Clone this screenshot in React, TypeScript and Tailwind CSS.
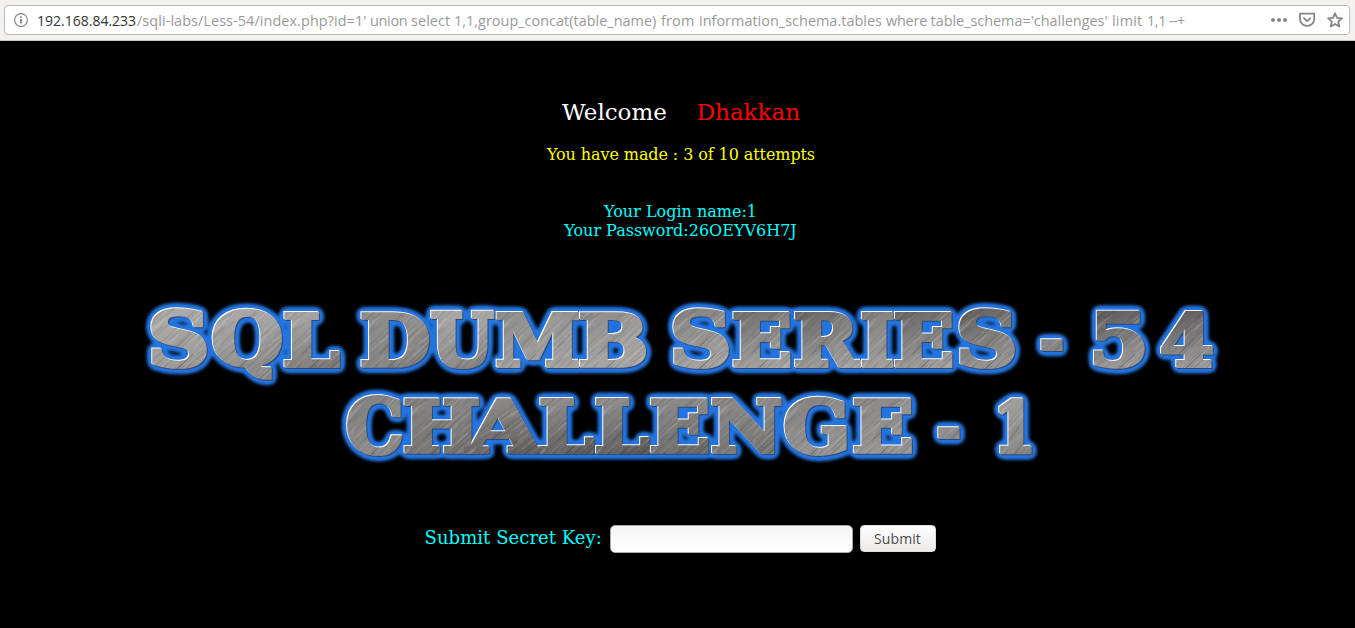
import React from "react";

type Glyph = { ch: string; x: [number, number]; y: [number, number]; tone: [string, string] };

const g = (ch: string, x0: number, x1: number, y0: number, y1: number, top: string, bottom: string): Glyph => ({
  ch,
  x: [x0, x1],
  y: [y0, y1],
  tone: [top, bottom],
});

const T1 = 311;
const B1 = 367.5;
const T2 = 398.5;
const B2 = 454;

// Letters of one inner list touch and share a single outline.
const runs: Glyph[][] = [
  [g("S", 150, 206.5, 309, 369, "#adabaa", "#979594")],
  [g("Q", 211.5, 281, 309, 380, "#aba9a8", "#8b8988")],
  [g("L", 283, 339.5, T1, B1, "#a8a6a5", "#757372")],
  [g("D", 360, 428.5, T1, B1, "#8f8d8c", "#858382")],
  [g("U", 430, 494, T1, 368.5, "#aba9a8", "#838180")],
  [g("M", 495.5, 578, T1, B1, "#918f8e", "#a6a4a3")],
  [g("B", 578.5, 645, T1, B1, "#918f8e", "#b1afae")],
  [g("S", 672, 728.5, 309.5, 369, "#8a8887", "#adabaa")],
  [g("E", 732, 790, T1, B1, "#767473", "#b1afae")],
  [g("R", 793.5, 860, T1, B1, "#6e6c6b", "#abaaa9")],
  [g("I", 860.5, 893, T1, B1, "#858382", "#abaaa9")],
  [g("E", 893.5, 952, T1, B1, "#6e6c6b", "#abaaa9")],
  [g("S", 958, 1014.5, 309.5, 369, "#6b6968", "#a3a1a0")],
  [g("-", 1040, 1062, 340, 352, "#8d8b8a", "#858382")],
  [g("5", 1093, 1144.5, T1, 369, "#626060", "#afadac")],
  [g("4", 1160, 1212, T1, B1, "#626060", "#abaaa9")],
  [g("C", 346, 401.5, 395.5, 455.5, "#848281", "#918f8e")],
  [
    g("H", 403, 478, T2, B2, "#858382", "#757372"),
    g("A", 463, 544, T2, B2, "#8d8b8a", "#5c5a59"),
    g("L", 539, 594, T2, B2, "#8f8d8c", "#565453"),
  ],
  [g("L", 594.5, 649, T2, B2, "#8f8d8c", "#545251")],
  [g("E", 649.5, 708, T2, B2, "#8d8b8a", "#676564")],
  [g("N", 711, 781, T2, B2, "#8b8988", "#757372")],
  [g("G", 783.5, 846, 396.5, 455.5, "#868483", "#9b9998")],
  [g("E", 852.5, 911.5, T2, B2, "#8d8b8a", "#9b9998")],
  [g("-", 937, 959, 427.5, 439.5, "#979594", "#858382")],
  [g("1", 998, 1031, T2, B2, "#a19f9e", "#858382")],
];

const FONT = '"DejaVu Serif", serif';
const WEIGHT = 4;

const measure = document.createElement("canvas").getContext("2d")!;
measure.font = `bold 100px ${FONT}`;

function transformOf({ ch, x, y }: Glyph) {
  const m = measure.measureText(ch);
  const sx = (x[1] - x[0] - WEIGHT) / (m.actualBoundingBoxRight + m.actualBoundingBoxLeft);
  const sy = (y[1] - y[0] - WEIGHT) / (m.actualBoundingBoxAscent + m.actualBoundingBoxDescent);
  const tx = x[0] + WEIGHT / 2 + m.actualBoundingBoxLeft * sx;
  const ty = y[0] + WEIGHT / 2 + m.actualBoundingBoxAscent * sy;
  return `translate(${tx} ${ty}) scale(${sx} ${sy})`;
}

// Uneven diagonal scratches of the brushed metal.
function scratches(dark: boolean) {
  let seed = dark ? 7 : 31;
  const rnd = () => (seed = (seed * 16807) % 2147483647) / 2147483647;
  let d = "";
  for (let i = 0; i < 150; i++) {
    const x = rnd() * 230 - 90;
    const y = rnd() * 150 - 100;
    const l = 12 + rnd() * 32;
    d += `M${x.toFixed(1)} ${y.toFixed(1)}l${l.toFixed(1)} ${(-l * 1.05).toFixed(1)}`;
  }
  return d;
}

const lightLines = scratches(false);
const darkLines = scratches(true);

function Banner() {
  const area = { filterUnits: "userSpaceOnUse", x: 130, y: 285, width: 1104, height: 200, colorInterpolationFilters: "sRGB" } as const;
  return (
    <svg className="block" width="1084" height="180" viewBox="140 295 1084 180">
      <defs>
        {runs.flatMap((run, r) =>
          run.map((l, i) => (
            <React.Fragment key={`${r}-${i}`}>
              <linearGradient id={`tone-${r}-${i}`} x1="0.4" y1="0.2" x2="0.6" y2="0.8">
                <stop offset="0" stopColor={l.tone[0]} />
                <stop offset="1" stopColor={l.tone[1]} />
              </linearGradient>
              <pattern id={`metal-${r}-${i}`} patternUnits="userSpaceOnUse" x="-10" y="-110" width="150" height="150" viewBox="-10 -110 150 150">
                <rect x="-10" y="-110" width="150" height="150" fill={`url(#tone-${r}-${i})`} />
                <path d={lightLines} stroke="#fff" strokeOpacity=".22" strokeWidth="1" />
                <path d={darkLines} stroke="#000" strokeOpacity=".16" strokeWidth="1" />
              </pattern>
            </React.Fragment>
          )),
        )}
        <filter id="bevel" {...area}>
          <feFlood floodColor="#fff" result="white" />
          <feOffset in="SourceAlpha" dx="-1" dy="-1" result="nw" />
          <feComposite in="white" in2="nw" operator="in" result="light" />
          <feFlood floodColor="#2b4a74" result="navy" />
          <feOffset in="SourceAlpha" dx="0.7" dy="0.7" result="se" />
          <feComposite in="navy" in2="se" operator="in" result="shade" />
          <feMerge>
            <feMergeNode in="shade" />
            <feMergeNode in="light" />
            <feMergeNode in="SourceGraphic" />
          </feMerge>
        </filter>
        <filter id="glow" {...area}>
          <feGaussianBlur in="SourceAlpha" stdDeviation="3.1" />
          <feComponentTransfer result="spread">
            <feFuncA type="linear" slope="7" intercept="-0.12" />
          </feComponentTransfer>
          <feFlood floodColor="#2374e0" />
          <feComposite in2="spread" operator="in" />
          <feGaussianBlur stdDeviation="1.3" result="halo" />
          <feMerge>
            <feMergeNode in="halo" />
            <feMergeNode in="SourceGraphic" />
          </feMerge>
        </filter>
      </defs>
      <g filter="url(#glow)" fontFamily={FONT} fontWeight="bold" fontSize="100" strokeWidth={WEIGHT}>
        {runs.map((run, r) => (
          <g key={r} filter="url(#bevel)">
            {run.map((l, i) => (
              <text
                key={i}
                transform={transformOf(l)}
                fill={`url(#metal-${r}-${i})`}
                stroke={`url(#metal-${r}-${i})`}
                strokeMiterlimit="2"
                vectorEffect="non-scaling-stroke"
              >
                {l.ch}
              </text>
            ))}
          </g>
        ))}
      </g>
    </svg>
  );
}

const words: [string, string][] = [
  ["/sqli-labs/Less-54/index.php?id=1'", "w-[233px] tracking-[0.09px]"],
  ["union", "w-[41px] tracking-[-0.3px]"],
  ["select", "w-[43px] tracking-[0.1px]"],
  ["1,1,group_concat(table_name)", "w-[207px] tracking-[0.04px]"],
  ["from", "w-[38px] tracking-[0.2px]"],
  ["information_schema.tables", "w-[187px] tracking-[0.04px]"],
  ["where", "w-[44.5px] tracking-[-0.2px]"],
  ["table_schema='challenges'", "w-[181.5px]"],
  ["limit", "w-[35px] tracking-[0.2px]"],
  ["1,1", "w-[22px] tracking-[-0.4px]"],
  ["--+", "w-[20px] tracking-[-0.6px]"],
];

export default function App() {
  return (
    <div className="flex h-[628px] w-[1355px] flex-col overflow-hidden bg-black font-['DejaVu_Serif',serif]">
      <header className="h-[41px] shrink-0 border-b border-[#c9c5c1] bg-[#f2f1f0] pt-[5px] pl-1">
        <div className="flex h-[30px] w-[1346px] items-center rounded-[4px] border border-[#bdb9b5] bg-white pl-[9px] font-['Open_Sans',sans-serif] text-[14.4px] text-[#999]">
          <svg width="14" height="14" viewBox="0 0 14 14" fill="none" stroke="#808080" className="mr-[9px]">
            <circle cx="7" cy="7" r="6.4" strokeWidth="1.1" />
            <path d="M7 6V10.5M7 3.2V4.8" strokeWidth="1.8" />
          </svg>
          <span className="w-[100px] whitespace-nowrap text-[14px] text-[#333]">192.168.84.233</span>
          {words.map(([t, w], i) => (
            <span key={i} className={`${w} shrink-0 pt-px whitespace-nowrap`}>
              {t}
            </span>
          ))}
          <div className="ml-auto flex items-center gap-[11px] pr-[6px]">
            <svg width="18" height="16" viewBox="0 0 18 16" fill="#858585">
              <circle cx="3" cy="8" r="2" />
              <circle cx="9" cy="8" r="2" />
              <circle cx="15" cy="8" r="2" />
            </svg>
            <svg width="17" height="16" viewBox="0 0 17 16" fill="none" stroke="#858585" strokeWidth="1.8" strokeLinecap="round" strokeLinejoin="round">
              <path d="M1 1.700H15.200V7.200A7.100 6.700 0 0 1 1 7.200ZM5 6.300L8.100 9.200L11.200 6.300" />
            </svg>
            <svg width="16" height="16" viewBox="0 0 16 16" fill="none" stroke="#858585" strokeWidth="1.8" strokeLinejoin="round">
              <path d="M8 1.300L10 5.800L14.900 6.300L11.200 9.600L12.300 14.500L8 12L3.700 14.500L4.800 9.600L1.100 6.300L6 5.800Z" />
            </svg>
          </div>
        </div>
      </header>
      <main className="flex flex-col items-center">
        <h1 className="mt-[57px] ml-[7px] flex h-7 w-[238px] items-center justify-between text-[23px] whitespace-nowrap">
          <span className="text-white">Welcome</span>
          <span className="text-[#f00]">Dhakkan</span>
        </h1>
        <p className="mt-[19px] ml-[7px] text-base leading-[19px] tracking-[-0.09px] text-[#ff0]">You have made : 3 of 10 attempts</p>
        <div className="mt-[38px] ml-1.5 text-center text-base leading-[19px] text-[#0ff]">
          <p>Your Login name:1</p>
          <p>Your Password:26OEYV6H7J</p>
        </div>
        <div className="mt-[55px] ml-[10px]">
          <Banner />
        </div>
        <form className="mt-[50px] ml-1.5 flex items-center" onSubmit={(e) => e.preventDefault()}>
          <label htmlFor="key" className="-mt-1 w-[185px] text-[18px] leading-[27px] tracking-[0.06px] whitespace-nowrap text-[#0ff]">
            Submit Secret Key:
          </label>
          <input id="key" className="h-[28px] w-[243px] rounded-[5px] border border-[#aaa] bg-linear-to-b from-[#f4f4f4] to-white outline-none" />
          <button className="mr-px -mt-px ml-[7px] h-[27px] w-[76px] rounded-[4px] border border-[#ddd] bg-linear-to-b from-white to-[#ebe9e8] font-['Open_Sans',sans-serif] text-[14px] tracking-[0.1px] text-[#4c4c4c]">
            Submit
          </button>
        </form>
      </main>
    </div>
  );
}
